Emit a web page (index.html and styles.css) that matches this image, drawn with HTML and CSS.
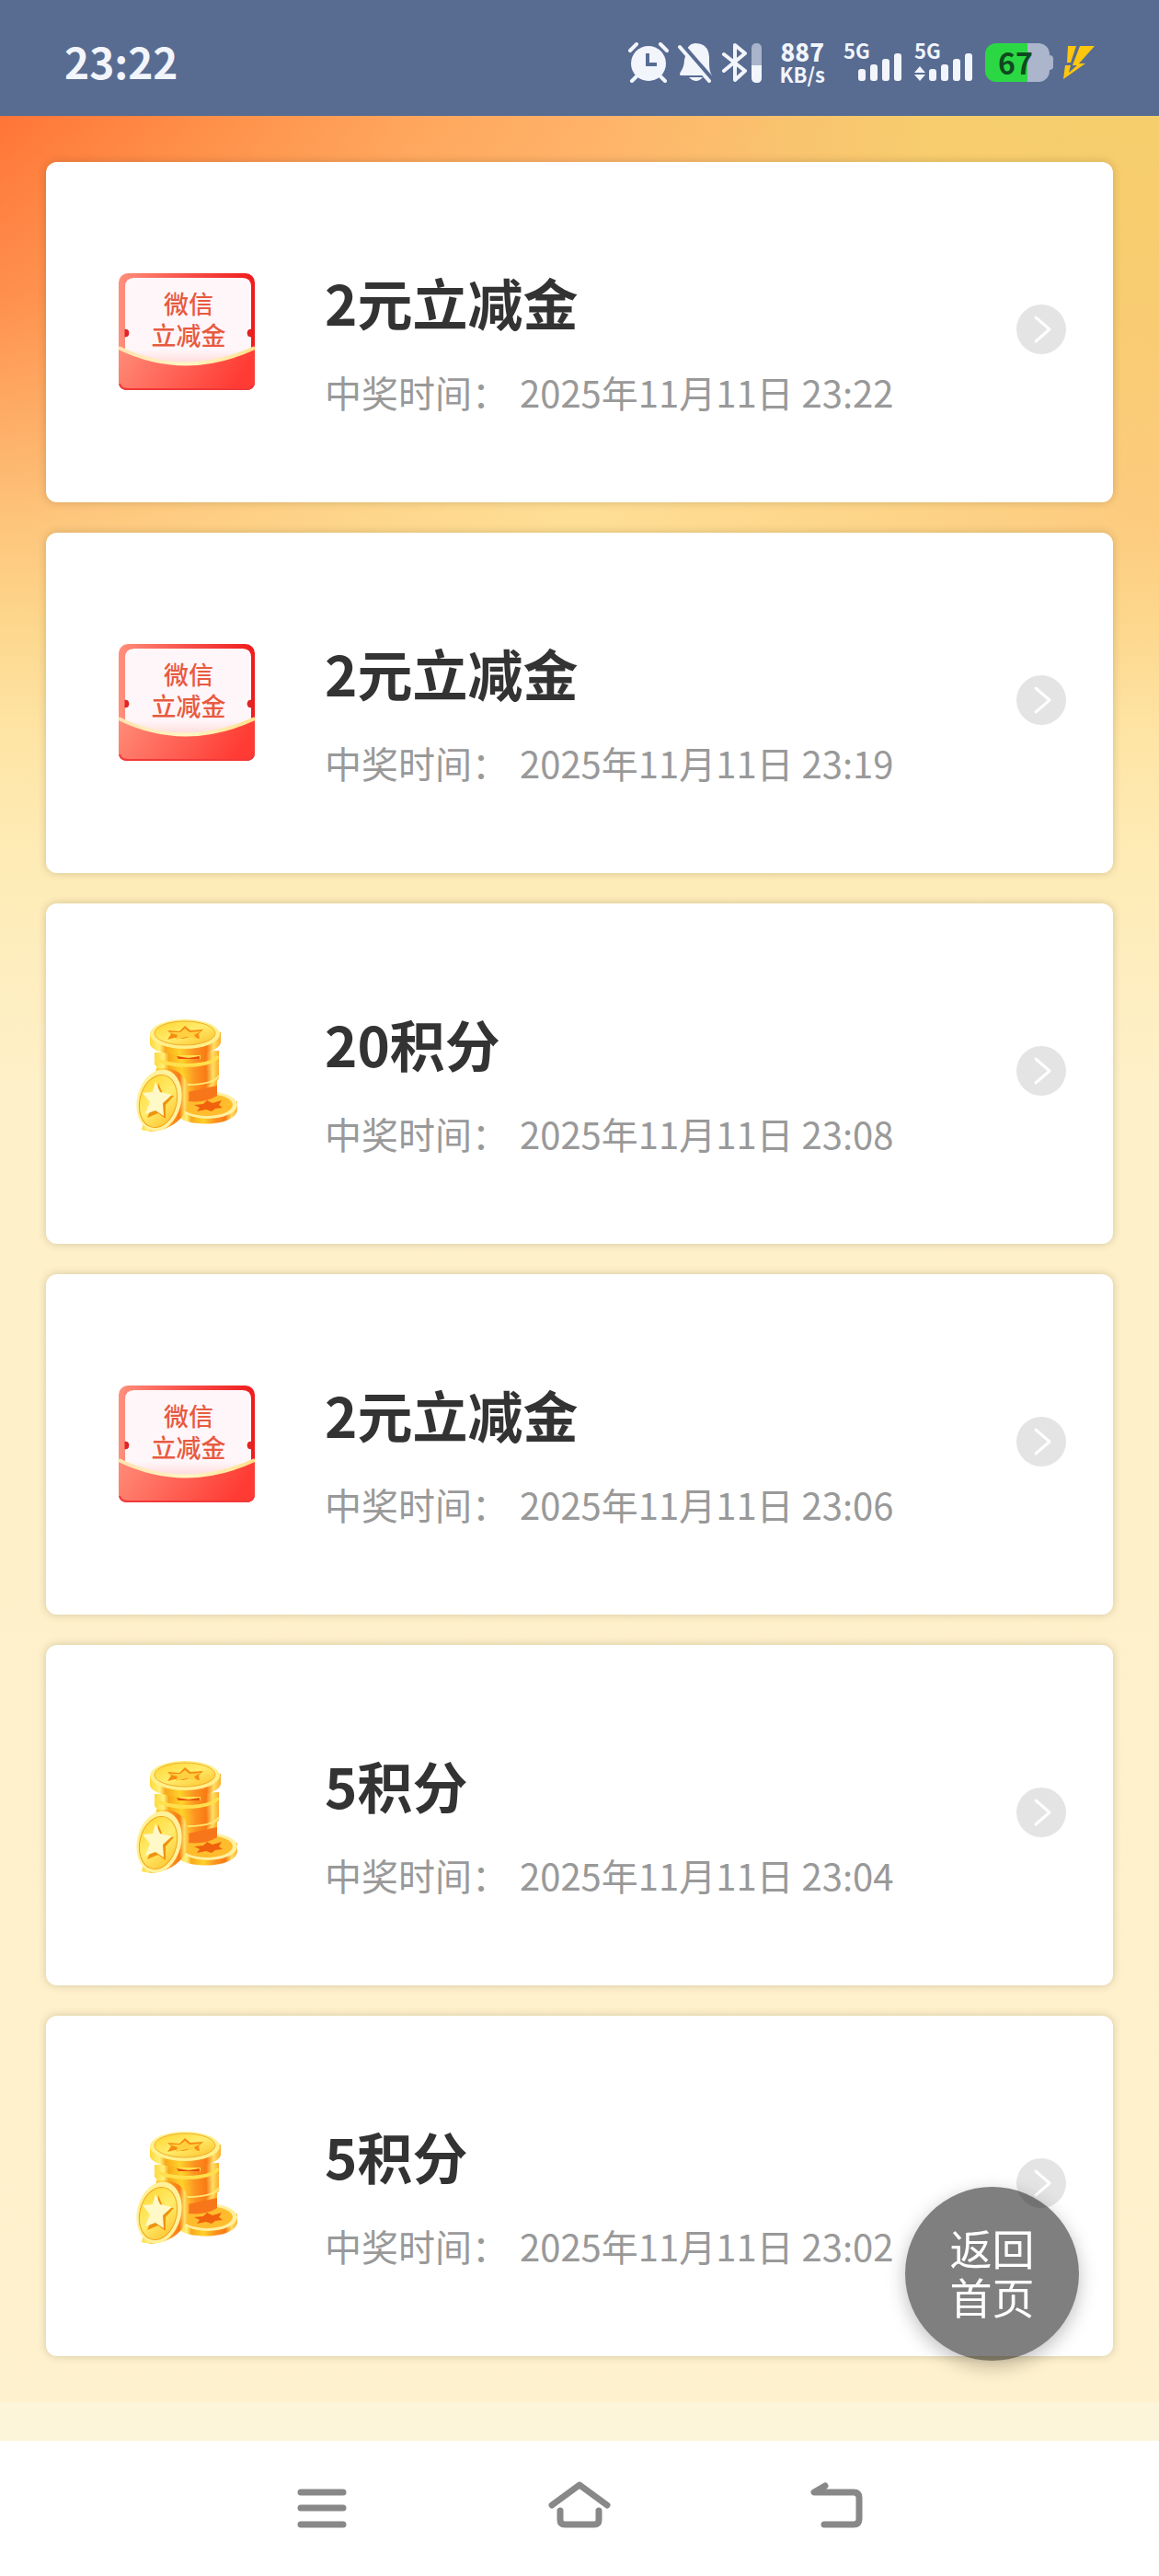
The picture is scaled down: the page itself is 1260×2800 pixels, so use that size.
FILE: index.html
```html
<!DOCTYPE html>
<html lang="zh-CN">
<head>
    <meta charset="UTF-8">
    <meta name="viewport" content="width=device-width, initial-scale=1.0">
    <title>我的奖品</title>
    <link rel="stylesheet" href="styles.css">
</head>
<body>
    <!-- shared icons -->
    <svg class="sprite" aria-hidden="true">
        <defs>
            <linearGradient id="redFrame" x1="0" y1="0" x2="1" y2="0">
                <stop offset="0" stop-color="#ff8f7c"/>
                <stop offset="0.5" stop-color="#f8504a"/>
                <stop offset="1" stop-color="#ee1c1c"/>
            </linearGradient>
            <linearGradient id="redPocket" x1="0" y1="0" x2="1" y2="0.2">
                <stop offset="0" stop-color="#ff8c78"/>
                <stop offset="1" stop-color="#ff3b34"/>
            </linearGradient>
            <linearGradient id="goldLine" x1="0" y1="0" x2="1" y2="0">
                <stop offset="0" stop-color="#ffe3b0"/>
                <stop offset="0.5" stop-color="#fff6c4"/>
                <stop offset="1" stop-color="#ffe08c"/>
            </linearGradient>
            <linearGradient id="paper" x1="0" y1="0" x2="0" y2="1">
                <stop offset="0.8" stop-color="#fff6fa"/>
                <stop offset="1" stop-color="#ffd3d0"/>
            </linearGradient>
            <linearGradient id="coinSide" x1="0" y1="0" x2="1" y2="0">
                <stop offset="0" stop-color="#ffd83c"/>
                <stop offset="0.14" stop-color="#fff07a"/>
                <stop offset="0.22" stop-color="#f8a81a"/>
                <stop offset="0.42" stop-color="#ffd22a"/>
                <stop offset="0.62" stop-color="#fc9420"/>
                <stop offset="0.8" stop-color="#f97a14"/>
                <stop offset="0.9" stop-color="#ffdf66"/>
                <stop offset="1" stop-color="#fdae28"/>
            </linearGradient>
            <linearGradient id="coinFace" x1="0" y1="0" x2="1" y2="1">
                <stop offset="0" stop-color="#ffd42c"/>
                <stop offset="0.5" stop-color="#ffec6c"/>
                <stop offset="1" stop-color="#fdbe26"/>
            </linearGradient>
        </defs>

        <symbol id="voucher" viewBox="0 0 150 150">
            <rect x="1" y="11" width="148" height="127" rx="10" fill="url(#redFrame)"/>
            <path d="M8 100V26q0-10 10-10h118q9 0 9 10v76q-68 24-137-2z" fill="url(#paper)"/>
            <path d="M8 72a4 4 0 0 1 0 8zM145 72a4 4 0 0 0 0 8z" fill="#e02424" stroke="#e02424" stroke-width="1"/>
            <path d="M1 93q72 35 148 0v36q0 9-10 9H11q-10 0-10-9z" fill="url(#redPocket)"/>
            <path d="M2 131q1 6 9 6h128q8 0 9-6" fill="none" stroke="#f2383a" stroke-width="2"/>
            <path d="M1 92q72 35 148 0" fill="none" stroke="url(#goldLine)" stroke-width="4"/>
            <text x="77" y="55">微信</text>
            <text x="77" y="89">立减金</text>
        </symbol>

        <symbol id="coins" viewBox="0 0 150 150">
            <!-- coin lying on the right -->
            <path d="M66 110v10c2 13 63 14 64-6v-9z" fill="url(#coinSide)"/>
            <ellipse cx="98" cy="109" rx="32" ry="15" fill="#fff0a0"/>
            <ellipse cx="97" cy="109" rx="28" ry="12" fill="#ffbc2c"/>
            <path d="M83 109l10-1 4-4 6 3 10-3-3 5 4 3-8 1-4 3-6-2-10 2 3-4z" fill="#f0620c"/>
            <!-- stack -->
            <path d="M46 84v13c6 11 58 11 62-1V82z" fill="url(#coinSide)"/>
            <path d="M76 95v10q20 2 32-6V88z" fill="#f8761a"/>
            <path d="M42 68v14c8 12 62 12 68-2V64z" fill="url(#coinSide)"/>
            <path d="M42 79c8 10 62 12 68-2" fill="none" stroke="#ffe672" stroke-width="2"/>
            <path d="M40 52v13c8 13 64 13 70-2V50z" fill="url(#coinSide)"/>
            <path d="M41 57c8 12 62 12 68-1M66 57h24" fill="none" stroke="#ffe04c" stroke-width="4"/>
            <path d="M64 56l13 2 12-2v3H66z" fill="#e8500a"/>
            <path d="M35 32v11c4 16 74 16 77-2V30z" fill="url(#coinSide)"/>
            <ellipse cx="73" cy="32" rx="38" ry="16" fill="#fff08a"/>
            <ellipse cx="73" cy="31" rx="33" ry="13" fill="url(#coinFace)" stroke="#f0ac2c" stroke-width="1"/>
            <path d="M54 28l13 1 6-6 6 5 14-1-5 5 1 5-10-2-8 2-9-1-8 2 4-6z" fill="#f58d10"/>
            <path d="M55 30l13 0 5-4 5 4 13-1-8 4 3 4-11-2-12 3 2-5z" fill="#ffd040"/>
            <!-- coin leaning in front -->
            <path d="M42 70q22-4 32 12c7 17 3 34-7 43-10 10-28 16-41 11z" fill="url(#coinSide)"/>
            <ellipse cx="45" cy="104" rx="24" ry="34" transform="rotate(14 45 104)" fill="#fff19a"/>
            <ellipse cx="44" cy="105" rx="20" ry="29" transform="rotate(14 44 105)" fill="url(#coinFace)" stroke="#f0a51c" stroke-width="1"/>
            <path d="M44 85l5 12 12 2-9 10v15l-8-6-12 5 6-14-8-11 13-1z" fill="#ee9310"/>
            <path d="M41 84l5 11 13 3-10 9 1 14-9-6-11 4 5-13-8-10 11-1z" fill="#fff9c8"/>
        </symbol>

        <symbol id="go" viewBox="0 0 54 54">
            <circle cx="27" cy="27" r="27" fill="#e4e4e4"/>
            <path d="M21 14l15 13-15 13" fill="none" stroke="#fff" stroke-width="3" stroke-linecap="round" stroke-linejoin="round"/>
        </symbol>

        <symbol id="bars" viewBox="0 0 48 30">
            <rect x="0" y="17" width="8" height="13" rx="3"/>
            <rect x="13" y="12" width="8" height="18" rx="3"/>
            <rect x="26" y="6" width="8" height="24" rx="3"/>
            <rect x="39" y="0" width="8" height="30" rx="3"/>
        </symbol>
    </svg>

    <header class="status-bar">
        <time class="clock">23:22</time>
        <div class="status-icons">
            <svg class="alarm" width="44" height="44" viewBox="0 0 44 44">
                <circle cx="22" cy="23" r="19" fill="#f2f5fc"/>
                <path d="M2 9l7-7M42 9l-7-7M9 37l-5 5M35 37l5 5" stroke="#f2f5fc" stroke-width="4" stroke-linecap="round"/>
                <path d="M21 12v12h10" fill="none" stroke="#586c92" stroke-width="4"/>
            </svg>
            <svg class="bell" width="38" height="44" viewBox="0 0 38 44">
                <path d="M10 7q3-6 9-6 14 0 15 15c0 11 0 15 3 20H3q-2-1 0-4 4-6 4-13z" fill="#f2f5fc"/>
                <path d="M12 38h15q-7 8-15 0z" fill="#f2f5fc"/>
                <path d="M4 2l33 38" stroke="#586c92" stroke-width="5"/>
                <path d="M2 5l32 37" stroke="#f2f5fc" stroke-width="4" stroke-linecap="round"/>
            </svg>
            <svg class="bluetooth" width="43" height="44" viewBox="0 0 43 44">
                <path d="M2 13l23 18-11 10V3l11 9L2 31" fill="none" stroke="#f2f5fc" stroke-width="4" stroke-linecap="round" stroke-linejoin="round"/>
                <rect x="32" y="1" width="11" height="43" rx="5" fill="#a9b3cb"/>
                <path d="M32 25h11v13q0 6-5 6-6 0-6-6z" fill="#f2f5fc"/>
            </svg>
            <div class="net-speed"><b>887</b><span>KB/s</span></div>
            <div class="signal">
                <span>5G</span>
                <svg width="48" height="30"><use href="#bars"/></svg>
            </div>
            <div class="signal">
                <span>5G</span>
                <div class="signal-row">
                    <svg width="12" height="16" viewBox="0 0 12 16"><path d="M0 7l6-7 6 7zM0 9l6 7 6-7z"/></svg>
                    <svg width="48" height="30"><use href="#bars"/></svg>
                </div>
            </div>
            <div class="battery">67</div>
            <svg class="bolt" width="34" height="36" viewBox="0 0 34 36">
                <path d="M5 0h9L8 18H4zM18 0h16L17 19h7L0 36 2 21h6l-2 8 9-8h-5z" fill="#fdc60f"/>
            </svg>
        </div>
    </header>

    <main class="prizes">
        <ul class="prize-list">
            <li>
                <a class="card" href="#">
                    <svg class="prize-icon"><use href="#voucher"/></svg>
                    <div class="info">
                        <h2>2元立减金</h2>
                        <p><span>中奖时间：</span><time>2025年11月11日 23:22</time></p>
                    </div>
                    <svg class="arrow"><use href="#go"/></svg>
                </a>
            </li>
            <li>
                <a class="card" href="#">
                    <svg class="prize-icon"><use href="#voucher"/></svg>
                    <div class="info">
                        <h2>2元立减金</h2>
                        <p><span>中奖时间：</span><time>2025年11月11日 23:19</time></p>
                    </div>
                    <svg class="arrow"><use href="#go"/></svg>
                </a>
            </li>
            <li>
                <a class="card" href="#">
                    <svg class="prize-icon"><use href="#coins"/></svg>
                    <div class="info">
                        <h2>20积分</h2>
                        <p><span>中奖时间：</span><time>2025年11月11日 23:08</time></p>
                    </div>
                    <svg class="arrow"><use href="#go"/></svg>
                </a>
            </li>
            <li>
                <a class="card" href="#">
                    <svg class="prize-icon"><use href="#voucher"/></svg>
                    <div class="info">
                        <h2>2元立减金</h2>
                        <p><span>中奖时间：</span><time>2025年11月11日 23:06</time></p>
                    </div>
                    <svg class="arrow"><use href="#go"/></svg>
                </a>
            </li>
            <li>
                <a class="card" href="#">
                    <svg class="prize-icon"><use href="#coins"/></svg>
                    <div class="info">
                        <h2>5积分</h2>
                        <p><span>中奖时间：</span><time>2025年11月11日 23:04</time></p>
                    </div>
                    <svg class="arrow"><use href="#go"/></svg>
                </a>
            </li>
            <li>
                <a class="card" href="#">
                    <svg class="prize-icon"><use href="#coins"/></svg>
                    <div class="info">
                        <h2>5积分</h2>
                        <p><span>中奖时间：</span><time>2025年11月11日 23:02</time></p>
                    </div>
                    <svg class="arrow"><use href="#go"/></svg>
                </a>
            </li>
        </ul>
    </main>
    <div class="page-end"></div>

    <button class="back-home" type="button">返回<br>首页</button>

    <nav class="nav-bar">
        <button type="button" aria-label="菜单">
            <svg width="68" height="52" viewBox="0 0 68 52">
                <path d="M11 12h46M11 29h46M11 47h46"/>
            </svg>
        </button>
        <button type="button" aria-label="主页">
            <svg width="68" height="52" viewBox="0 0 68 52">
                <path d="M4 26L34 4l30 22M13 32v10q0 5 5 5h32q5 0 5-5V32"/>
            </svg>
        </button>
        <button type="button" aria-label="返回">
            <svg width="68" height="52" viewBox="0 0 68 52">
                <path d="M21 5L9 12h43q6 0 6 6v23q0 6-6 6H20"/>
            </svg>
        </button>
    </nav>
</body>
</html>
```
FILE: styles.css
```css
* {
    box-sizing: border-box;
}
body {
    margin: 0;
    min-height: 100vh;
    display: flex;
    flex-direction: column;
    font-family: "Noto Sans CJK SC", "Noto Sans", sans-serif;
    background-color: #fef1cc;
}
button {
    border: 0;
    padding: 0;
    background: none;
    font-family: inherit;
    cursor: pointer;
}
.sprite {
    position: absolute;
    width: 0;
    height: 0;
    visibility: hidden;
}
.sprite text {
    font-size: 27px;
    font-weight: 500;
    fill: #e85a40;
    text-anchor: middle;
}

/* status bar */
.status-bar {
    height: 126px;
    padding: 10px 70px 0;
    display: flex;
    align-items: center;
    justify-content: space-between;
    background-color: #586c92;
    color: #f2f5fc;
}
.clock {
    padding-bottom: 4px;
    font-size: 46px;
    line-height: 48px;
    font-weight: 700;
}
.status-icons {
    display: flex;
    align-items: center;
    fill: #f2f5fc;
}
.bell {
    margin: 0 10px;
}
.net-speed {
    margin: 0 20px;
    display: flex;
    flex-direction: column;
    align-items: center;
    font-size: 22px;
    line-height: 24px;
    font-weight: 700;
}
.net-speed b {
    font-size: 26px;
}
.signal {
    margin-right: 13px;
    height: 44px;
    display: flex;
    flex-direction: column;
    align-items: flex-end;
    font-size: 22px;
    line-height: 14px;
    font-weight: 700;
}
.signal span {
    align-self: flex-start;
    line-height: 16px;
}
.signal > svg {
    margin-left: 16px;
    margin-top: -4px;
}
.signal-row {
    margin-top: -4px;
    display: flex;
    align-items: flex-end;
    gap: 4px;
}
.battery {
    position: relative;
    width: 70px;
    height: 42px;
    padding-right: 4px;
    border-radius: 12px;
    background: linear-gradient(to right, #2bd844 66%, #abb5cc 66%);
    color: #10491e;
    font-size: 32px;
    line-height: 40px;
    font-weight: 700;
    text-align: center;
}
.battery::after {
    content: "";
    position: absolute;
    left: 70px;
    top: 13px;
    width: 4px;
    height: 16px;
    border-radius: 0 4px 4px 0;
    background-color: #abb5cc;
}
.bolt {
    margin-left: 15px;
}

/* prize list */
.prizes {
    flex: 1;
    padding: 50px 50px;
    background:
        radial-gradient(ellipse 600px 200px at 50% 440px, rgba(254, 228, 155, 0.8), rgba(254, 228, 155, 0)),
        linear-gradient(to bottom, rgba(253, 200, 125, 0) 0, rgba(253, 200, 125, 0.3) 190px, rgba(253, 203, 128, 0.92) 440px, #fdd88e 560px, #fee5a6 680px, #feebb5 800px, #fef0c8 1050px, #fef1cd 100%),
        linear-gradient(to right, #ff7537 0, #ff8f48 18%, #ffa55c 35%, #ffb369 52%, #f9c36e 68%, #f7cd6d 80%, #f6ce6b 100%);
}
.prize-list {
    margin: 0;
    padding: 0;
    list-style: none;
    display: flex;
    flex-direction: column;
    gap: 33px;
}
.card {
    min-height: 370px;
    padding: 0 51px 0 78px;
    display: flex;
    align-items: center;
    background-color: #fff;
    border-radius: 12px;
    box-shadow: 0 0 10px rgba(60, 50, 0, 0.22);
    color: #333;
    text-decoration: none;
}
.prize-icon {
    flex: none;
    width: 150px;
    height: 150px;
}
.info {
    flex: 1;
    margin-left: 75px;
    padding-top: 26px;
}
.info h2 {
    margin: 0 0 32px;
    font-size: 60px;
    line-height: 72px;
    font-weight: 700;
}
.info p {
    margin: 0;
    display: flex;
    gap: 12px;
    font-size: 40px;
    line-height: 60px;
    font-weight: 400;
    color: #999;
}
.arrow {
    flex: none;
    width: 54px;
    height: 54px;
    margin-bottom: 6px;
}
.page-end {
    height: 42px;
    background-color: #fdf5da;
}

/* floating button */
.back-home {
    position: fixed;
    right: 87px;
    bottom: 234px;
    width: 189px;
    height: 189px;
    padding-bottom: 6px;
    border-radius: 50%;
    background-color: rgba(0, 0, 0, 0.5);
    box-shadow: 0 6px 20px rgba(0, 0, 0, 0.25);
    color: #fff;
    font-size: 46px;
    line-height: 53px;
}

/* system navigation */
.nav-bar {
    height: 147px;
    padding: 0 16.67% 4px;
    display: grid;
    grid-template-columns: repeat(3, 1fr);
    background-color: #fff;
}
.nav-bar svg {
    fill: none;
    stroke: #888;
    stroke-width: 7;
    stroke-linecap: round;
    stroke-linejoin: round;
}
```
